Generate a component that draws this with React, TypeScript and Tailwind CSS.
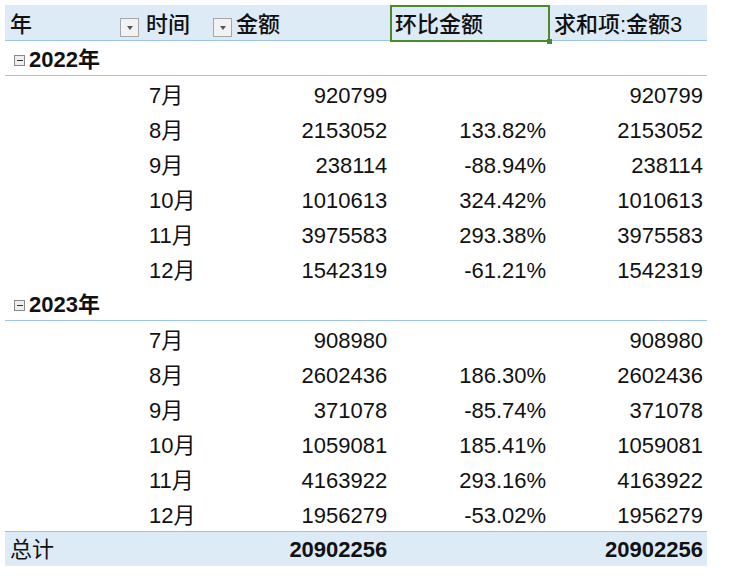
const font = { fontFamily: '"Liberation Sans", "Noto Sans CJK SC", sans-serif' }

type Row = [string, string, string, string]

const y2022: Row[] = [
  ["7月", "920799", "", "920799"],
  ["8月", "2153052", "133.82%", "2153052"],
  ["9月", "238114", "-88.94%", "238114"],
  ["10月", "1010613", "324.42%", "1010613"],
  ["11月", "3975583", "293.38%", "3975583"],
  ["12月", "1542319", "-61.21%", "1542319"],
]
const y2023: Row[] = [
  ["7月", "908980", "", "908980"],
  ["8月", "2602436", "186.30%", "2602436"],
  ["9月", "371078", "-85.74%", "371078"],
  ["10月", "1059081", "185.41%", "1059081"],
  ["11月", "4163922", "293.16%", "4163922"],
  ["12月", "1956279", "-53.02%", "1956279"],
]

function Drop() {
  return (
    <span className="w-[19px] h-[19px] border border-[#a6a6a6] bg-[#f2f2f2] flex items-center justify-center mb-[1px]">
      <span className="w-0 h-0 border-l-[3px] border-r-[3px] border-t-[4px] border-l-transparent border-r-transparent border-t-[#555]" />
    </span>
  )
}

function Box() {
  return (
    <span className="w-[11px] h-[11px] border border-[#888] bg-[#eee] flex items-center justify-center mr-[4px]">
      <span className="w-[6px] h-px bg-[#333]" />
    </span>
  )
}

function Months({ rows }: { rows: Row[] }) {
  return (
    <>
      {rows.map((r, i) => (
        <div key={i} className="flex h-[35px] items-end pb-[2px] leading-[26px]">
          <div className="w-[140px]" />
          <div className="w-[65px] pl-[5px]">{r[0]}</div>
          <div className="w-[185px] text-right pr-[5px]">{r[1]}</div>
          <div className="w-[160px] text-right pr-[5px]">{r[2]}</div>
          <div className="w-[157px] text-right pr-[4px]">{r[3]}</div>
        </div>
      ))}
    </>
  )
}

export default function App() {
  return (
    <div className="w-[733px] h-[576px] bg-white pt-[5px] pl-[5px] text-[22px] text-[#111]" style={font}>
      <div className="w-[702px]">
        <div className="flex h-[36px] bg-[#ddebf7] border-b border-[#9dc3e6] items-end leading-[26px] font-medium">
          <div className="w-[135px] pl-[5px] flex justify-between items-end pr-[1px] pb-[2px]">
            <span>年</span>
            <Drop />
          </div>
          <div className="w-[93px] flex justify-between items-end pl-[6px] pr-[1px] pb-[2px]">
            <span>时间</span>
            <Drop />
          </div>
          <div className="w-[157px] pl-[3px] pb-[2px]">金额</div>
          <div className="relative w-[160px] h-[37px] -mb-[2px] border-2 border-[#4a8a2a] pl-[3px] flex items-end pb-[2px]">
            环比金额
            <span className="absolute -right-[4px] -bottom-[4px] w-[5px] h-[5px] bg-[#4a8a2a]" />
          </div>
          <div className="w-[157px] pl-[4px] pb-[2px]">求和项:金额3</div>
        </div>
        <div className="flex h-[35px] items-end pb-[2px] leading-[26px] border-b border-[#9dc3e6] font-bold">
          <span className="pl-[9px] flex items-center"><Box />2022年</span>
        </div>
        <Months rows={y2022} />
        <div className="flex h-[35px] items-end pb-[2px] leading-[26px] border-b border-[#9dc3e6] font-bold">
          <span className="pl-[9px] flex items-center"><Box />2023年</span>
        </div>
        <Months rows={y2023} />
        <div className="flex h-[35px] items-end pb-[3px] leading-[26px] bg-[#ddebf7] border-t border-[#9dc3e6] font-bold">
          <div className="w-[205px] pl-[5px] font-normal">总计</div>
          <div className="w-[185px] text-right pr-[5px]">20902256</div>
          <div className="w-[160px]" />
          <div className="w-[157px] text-right pr-[4px]">20902256</div>
        </div>
      </div>
    </div>
  )
}
